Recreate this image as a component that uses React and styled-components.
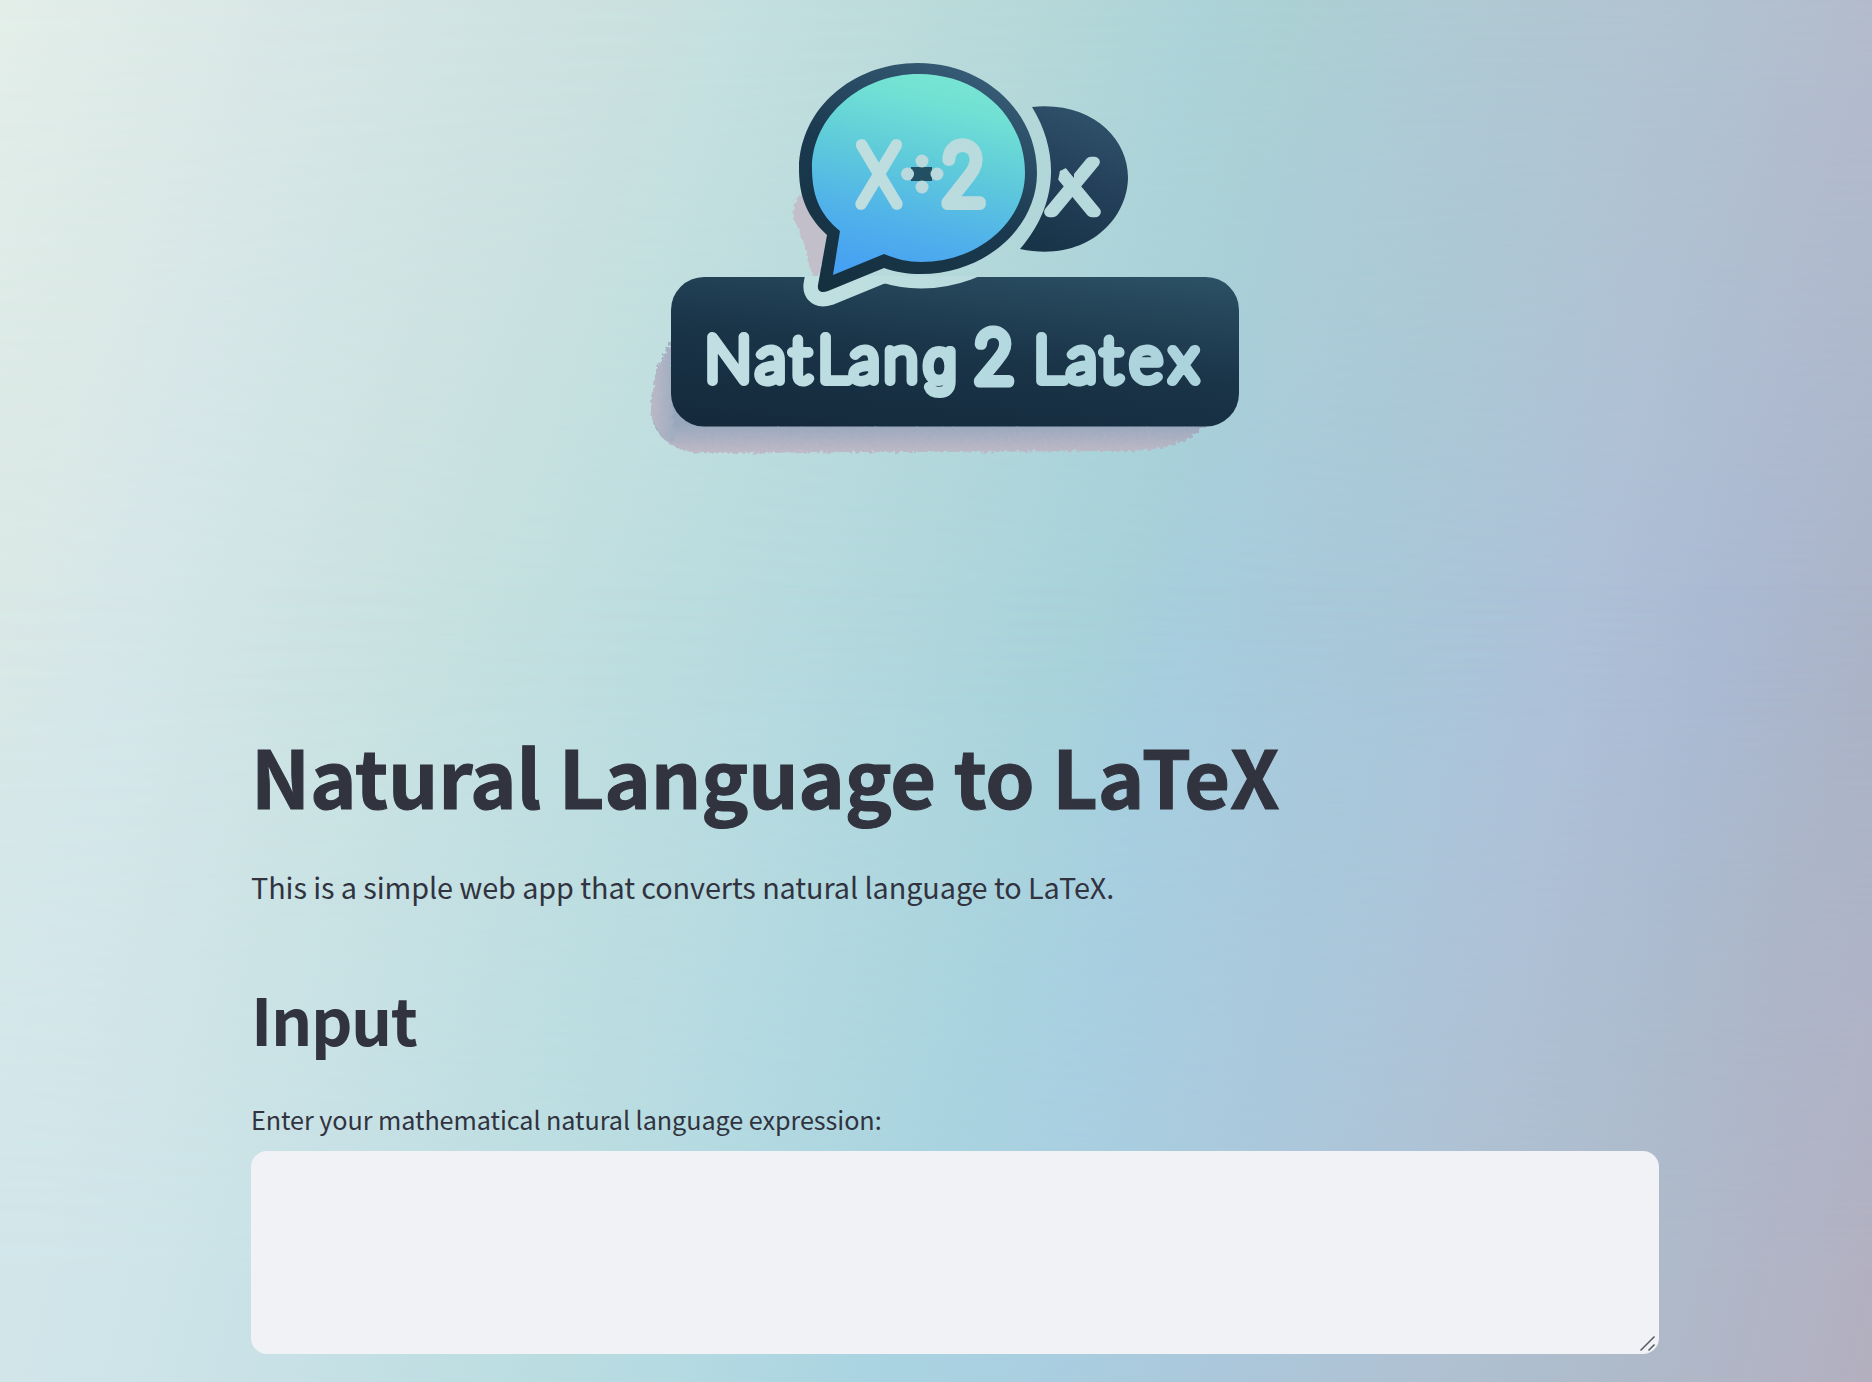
import React from "react";
import styled, { createGlobalStyle } from "styled-components";

const GlobalStyle = createGlobalStyle`
  * { box-sizing: border-box; }
  html, body, #root { height: 100%; }
  body {
    margin: 0;
    overflow: hidden;
    color: #31333f;
    font-family: "Noto Sans CJK SC", "Noto Sans", sans-serif;
  }
`;

// Builds a slanted gradient whose colours fall on the given x positions along the row y.
const WIDTH = 1872;
const HEIGHT = 1382;
const ANGLE = 104;
function slanted(y, stops) {
  const a = (ANGLE * Math.PI) / 180;
  const sin = Math.sin(a);
  const down = -Math.cos(a);
  const length = WIDTH * sin + HEIGHT * down;
  const parts = stops.map(([x, color]) => {
    const t = 0.5 + ((x - WIDTH / 2) * sin + (y - HEIGHT / 2) * down) / length;
    return `${color} ${(t * 100).toFixed(2)}%`;
  });
  return `linear-gradient(${ANGLE}deg, ${parts.join(", ")})`;
}

const topWash = slanted(15, [
  [0, "#e3eee9"], [300, "#d7e6e5"], [668, "#c8e0de"], [720, "#c5e0e0"],
  [885, "#bddbdb"], [1075, "#b3d7d8"], [1195, "#acd3d8"], [1290, "#abd0d3"],
  [1430, "#afcad3"], [1670, "#b1c3d0"], [1872, "#b3bbcb"],
]);
const middleWash = slanted(655, [
  [0, "#dae9e6"], [120, "#d6e7ea"], [358, "#cae3e2"], [597, "#bfdee0"],
  [776, "#b6dbe0"], [955, "#aed6dc"], [1085, "#a8d2db"], [1170, "#a6cedf"],
  [1373, "#a8c8da"], [1552, "#adc2da"], [1731, "#aab9d3"], [1872, "#aab3c8"],
]);
const bottomWash = slanted(1367, [
  [0, "#d2e6ea"], [275, "#c8e1e6"], [537, "#bbdde1"], [740, "#b1d8e2"],
  [860, "#aad4e1"], [1027, "#a9cfe1"], [1194, "#abc8dc"], [1433, "#afc1d2"],
  [1612, "#aebbca"], [1767, "#b1b4c5"], [1872, "#b3afbf"],
]);

const Page = styled.div`
  min-height: 1382px;
  isolation: isolate;
  position: relative;
  display: flex;
  justify-content: center;
  padding-left: 38px;
  background: ${middleWash};

  &::before,
  &::after {
    content: "";
    position: absolute;
    inset: 0;
    z-index: -1;
  }
  &::before {
    background: ${topWash};
    mask-image: linear-gradient(to bottom, #000, transparent 52%);
  }
  &::after {
    background: ${bottomWash};
    mask-image: linear-gradient(to top, #000 8%, transparent 58%);
  }
`;

const Column = styled.main`
  width: 1408px;
  display: flex;
  flex-direction: column;
`;

const LogoFrame = styled.div`
  display: flex;
  justify-content: center;
  height: 704px;
`;

const LogoArt = styled.svg`
  display: block;
  width: 704px;
  height: 704px;
`;

const Title = styled.h1`
  margin: 0;
  padding-top: 18px;
  height: 145px;
  font-size: 79px;
  line-height: 106px;
  font-weight: 700;
  letter-spacing: -0.2px;
  -webkit-text-stroke: 1.1px #31333f;
  white-space: nowrap;
`;

const Lead = styled.p`
  margin: 0;
  padding-top: 12px;
  height: 110px;
  font-size: 28.8px;
  line-height: 51px;
  letter-spacing: -0.075px;
`;

const SectionTitle = styled.h2`
  margin: 0;
  padding-top: 16px;
  height: 132px;
  font-size: 64.6px;
  line-height: 86px;
  font-weight: 600;
  letter-spacing: -1.4px;
`;

const Field = styled.div`
  display: flex;
  flex-direction: column;
`;

const Label = styled.label`
  height: 60px;
  padding-top: 7px;
  font-size: 25.2px;
  line-height: 42px;
  letter-spacing: -0.065px;
`;

const InputShell = styled.div`
  position: relative;
  display: flex;
  height: 203px;
`;

const TextArea = styled.textarea`
  flex: 1;
  border: 0;
  border-radius: 16px;
  padding: 24px;
  resize: none;
  outline: 0;
  background: #f0f2f6;
  color: #31333f;
  font: inherit;
`;

const ResizeGrip = styled.svg`
  position: absolute;
  right: 3px;
  bottom: 2px;
  width: 17px;
  height: 17px;
`;

const BUBBLE =
  "M827 235 C803 213 799 190 799 168 C800 109 852 63 918 63 C985 63 1037 112 1037 173 C1037 228 985 274 921 274 C907 274 896 272 884 268 L828 291 C822 293 817 292 818 285 Z";
const BUBBLE_FILL =
  "M840 231 C819 214 812 194 812 168 C812 117 860 74 919 74 C980 74 1025 118 1025 173 C1025 222 978 262 921 262 C908 262 896 259 884 254 L833 275 Z";

function Logo() {
  return (
    <LogoArt viewBox="603 0 704 704" role="img" aria-label="NatLang 2 Latex">
      <defs>
        <linearGradient id="plate" x1="0" y1="1" x2="0.5" y2="-0.2">
          <stop offset="0" stopColor="#14293b" />
          <stop offset="0.5" stopColor="#1a3448" />
          <stop offset="1" stopColor="#2c5165" />
        </linearGradient>
        <linearGradient id="rim" x1="0.2" y1="1" x2="0.7" y2="0">
          <stop offset="0" stopColor="#15303f" />
          <stop offset="0.5" stopColor="#1b3a50" />
          <stop offset="1" stopColor="#385d78" />
        </linearGradient>
        <linearGradient id="water" x1="0.35" y1="1" x2="0.6" y2="0">
          <stop offset="0" stopColor="#47a1f2" />
          <stop offset="0.25" stopColor="#50b1ea" />
          <stop offset="0.6" stopColor="#60cdd9" />
          <stop offset="0.85" stopColor="#70e0d5" />
          <stop offset="1" stopColor="#78e5d2" />
        </linearGradient>
        <linearGradient id="disc" x1="0.3" y1="1" x2="0.6" y2="0">
          <stop offset="0" stopColor="#173448" />
          <stop offset="0.5" stopColor="#243f59" />
          <stop offset="1" stopColor="#2f526a" />
        </linearGradient>
        <linearGradient id="lettering" gradientUnits="userSpaceOnUse" x1="700" y1="0" x2="1200" y2="0">
          <stop offset="0" stopColor="#c2dfe3" />
          <stop offset="0.5" stopColor="#b6dae0" />
          <stop offset="1" stopColor="#abd3dd" />
        </linearGradient>
        <linearGradient id="halo" gradientUnits="userSpaceOnUse" x1="800" y1="0" x2="1070" y2="0">
          <stop offset="0" stopColor="#c0dfe0" />
          <stop offset="1" stopColor="#b6d9dc" />
        </linearGradient>
        <linearGradient id="shade" gradientUnits="userSpaceOnUse" x1="0" y1="424" x2="0" y2="452">
          <stop offset="0" stopColor="#98a7bd" />
          <stop offset="1" stopColor="#bdb9c6" />
        </linearGradient>
        <linearGradient id="shadeSide" gradientUnits="userSpaceOnUse" x1="648" y1="0" x2="674" y2="0">
          <stop offset="0" stopColor="#bfbac8" />
          <stop offset="1" stopColor="#9fadc0" />
        </linearGradient>
        <filter id="ragged" x="-5%" y="-10%" width="110%" height="120%">
          <feTurbulence type="fractalNoise" baseFrequency="0.25" numOctaves="2" seed="4" />
          <feDisplacementMap in="SourceGraphic" scale="7" />
          <feGaussianBlur stdDeviation="0.6" />
        </filter>
        <clipPath id="plateClip">
          <rect x="671" y="276" width="568" height="151" />
        </clipPath>
        <clipPath id="stub">
          <path d="M1040 190 H1056 L1060 171 L1066 168 L1074 178 V140 H1120 V230 H1040 Z" />
        </clipPath>
      </defs>

      <g filter="url(#ragged)">
        <path d="M673 338 C659 358 651 382 651 408 C651 438 676 453 704 453 L1120 451 C1160 451 1186 445 1206 425 L760 425 L673 395 Z" fill="url(#shade)" />
        <path d="M673 338 C659 358 651 382 651 408 C651 424 660 436 674 444 Z" fill="url(#shadeSide)" />
      </g>
      <path
        filter="url(#ragged)"
        d="M802 193 C792 200 791 214 798 228 C809 250 807 268 817 284 L829 236 C815 224 808 210 802 193 Z"
        fill="#c3bfca"
      />

      <rect x="671" y="277" width="568" height="149.500" rx="33" fill="url(#plate)" />
      <g clipPath="url(#plateClip)">
        <path d={BUBBLE} fill="none" stroke="url(#halo)" strokeWidth="29" strokeLinejoin="round" />
      </g>
      <path d="M1032 107 C1092 101 1128 139 1128 177 C1128 219 1087 263 1020 249 C1058 205 1060 153 1032 107 Z" fill="url(#disc)" />
      <path d={BUBBLE} fill="url(#rim)" />
      <path d={BUBBLE_FILL} fill="url(#water)" />

      <g fill="url(#halo)" stroke="url(#halo)" strokeLinejoin="round" fontFamily="Inter, sans-serif" fontWeight="100">
        <text x="858" y="204" fontSize="81" strokeWidth="11.500" textLength="42" lengthAdjust="spacingAndGlyphs">X</text>
        <text x="940" y="203.500" fontSize="81" strokeWidth="12" textLength="47" lengthAdjust="spacingAndGlyphs">2</text>
        <g clipPath="url(#stub)">
          <text x="1047" y="212" fontSize="92" strokeWidth="10.500" textLength="51" lengthAdjust="spacingAndGlyphs">x</text>
        </g>
      </g>
      <rect x="911" y="167" width="21" height="14" fill="#224f62" />
      <g fill="#b9d9dd">
        <circle cx="922" cy="161" r="6.500" />
        <circle cx="922" cy="187" r="6.500" />
        <circle cx="907.500" cy="174" r="6.500" />
        <circle cx="937" cy="174" r="6.500" />
      </g>

      <g
        fill="url(#lettering)"
        stroke="url(#lettering)"
        strokeWidth="10"
        strokeLinejoin="round"
        fontFamily="Lato, sans-serif"
        fontWeight="100"
        fontSize="62"
      >
        <text x="705 756 790 818 850 884 924" y="381">
          NatLan<tspan fontFamily="Inter, sans-serif" fontSize="55">g</tspan>
        </text>
        <text x="973" y="382" fontSize="69" fontFamily="Inter, sans-serif" strokeWidth="11" textLength="42" lengthAdjust="spacingAndGlyphs">2</text>
        <text x="1034 1067 1101 1130 1170" y="381">Latex</text>
      </g>
    </LogoArt>
  );
}

export default function App() {
  return (
    <>
      <GlobalStyle />
      <Page>
        <Column>
          <LogoFrame>
            <Logo />
          </LogoFrame>
          <Title>Natural Language to LaTeX</Title>
          <Lead>This is a simple web app that converts natural language to LaTeX.</Lead>
          <SectionTitle>Input</SectionTitle>
          <Field>
            <Label htmlFor="expression">Enter your mathematical natural language expression:</Label>
            <InputShell>
              <TextArea id="expression" />
              <ResizeGrip viewBox="0 0 17 17" fill="none" stroke="#555960" strokeWidth="1.500">
                <path d="M1.500 15.500 15.500 1.500M9.500 15.500l6-6" />
              </ResizeGrip>
            </InputShell>
          </Field>
        </Column>
      </Page>
    </>
  );
}
